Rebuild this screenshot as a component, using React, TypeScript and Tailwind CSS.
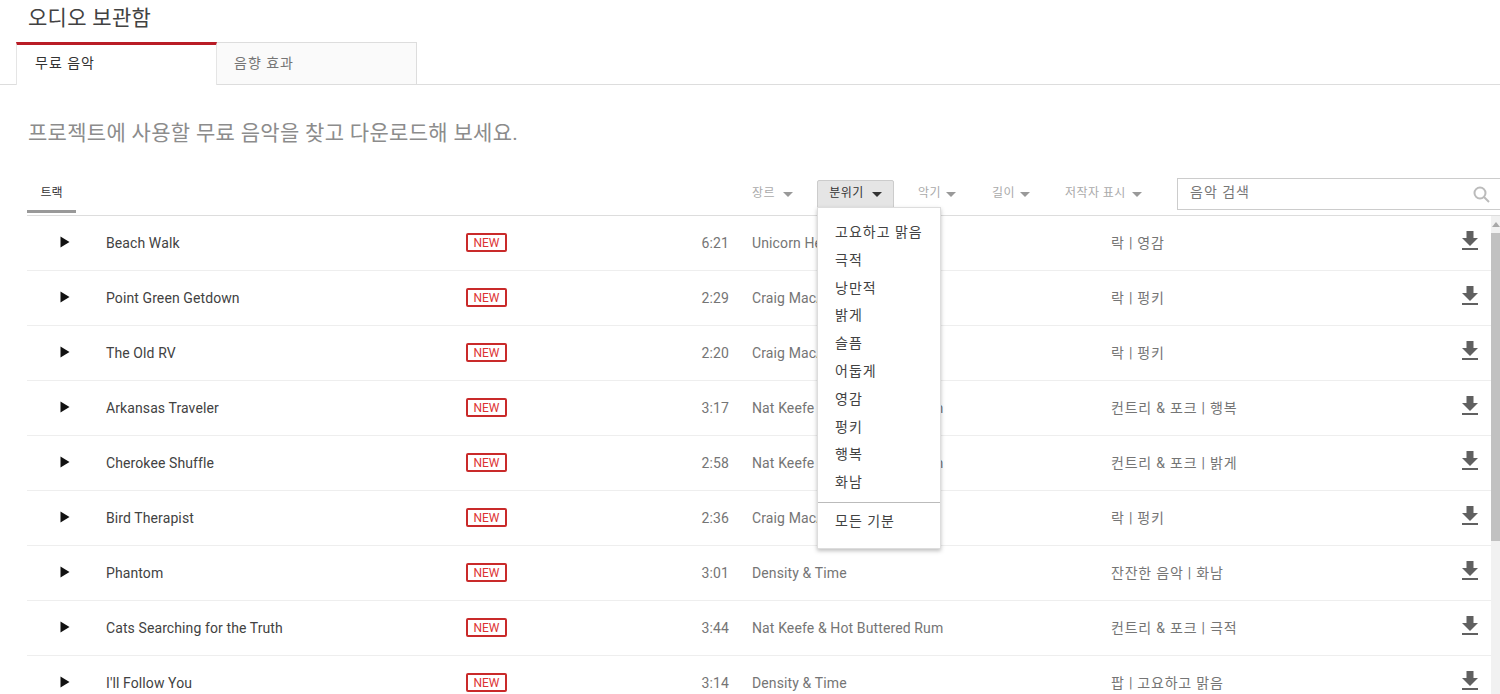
import React from 'react';

const tracks = [
  { title: 'Beach Walk', time: '6:21', artist: 'Unicorn Heads', genre: '락 | 영감' },
  { title: 'Point Green Getdown', time: '2:29', artist: 'Craig MacArthur', genre: '락 | 펑키' },
  { title: 'The Old RV', time: '2:20', artist: 'Craig MacArthur', genre: '락 | 펑키' },
  { title: 'Arkansas Traveler', time: '3:17', artist: 'Nat Keefe & Hot Buttered Rum', genre: '컨트리 & 포크 | 행복' },
  { title: 'Cherokee Shuffle', time: '2:58', artist: 'Nat Keefe & Hot Buttered Rum', genre: '컨트리 & 포크 | 밝게' },
  { title: 'Bird Therapist', time: '2:36', artist: 'Craig MacArthur', genre: '락 | 펑키' },
  { title: 'Phantom', time: '3:01', artist: 'Density & Time', genre: '잔잔한 음악 | 화남' },
  { title: 'Cats Searching for the Truth', time: '3:44', artist: 'Nat Keefe & Hot Buttered Rum', genre: '컨트리 & 포크 | 극적' },
  { title: "I'll Follow You", time: '3:14', artist: 'Density & Time', genre: '팝 | 고요하고 맑음' },
];

const moods = ['고요하고 맑음', '극적', '낭만적', '밝게', '슬픔', '어둡게', '영감', '펑키', '행복', '화남'];

const Caret: React.FC<{ dark?: boolean }> = ({ dark }) => (
  <span
    className={`w-0 h-0 border-x-[5px] border-x-transparent border-t-[5px] ${dark ? 'border-t-[#333]' : 'border-t-[#999]'}`}
  />
);

const Filter: React.FC<{ label: string; width: string; gap: string }> = ({ label, width, gap }) => (
  <div className={`flex items-center shrink-0 text-[12px] tracking-[0.4px] text-[#aaa] ${width} ${gap}`}>
    <span className="pb-[2px]">{label}</span>
    <Caret />
  </div>
);

const Row: React.FC<(typeof tracks)[number]> = ({ title, time, artist, genre }) => (
  <div className="flex items-center h-[55px] shrink-0 border-b border-[#eee] text-[14px] text-[#757575]">
    <div className="w-[79px] flex pl-[33px] -mt-[3px]">
      <svg width="10" height="12" viewBox="0 0 10 12">
        <path d="M0.5 0.5 L9.5 6 L0.5 11.5 Z" fill="#111" />
      </svg>
    </div>
    <div className="w-[360px] text-[#424242] tracking-[0.1px]">{title}</div>
    <div className="w-[236px]">
      <span className="flex items-center justify-center w-[41px] h-[19px] mb-[1px] border-2 border-[#c92a2a] rounded-[2px] text-[12px] text-[#d33]">
        NEW
      </span>
    </div>
    <div className="w-[28px] text-right -ml-[1px] mr-[23px] tracking-[0.1px]">{time}</div>
    <div className="w-[359px] whitespace-nowrap tracking-[0.12px]">{artist}</div>
    <div className="flex-1 whitespace-nowrap tracking-[0.78px]">{genre}</div>
    <svg className="mr-[13px] -mt-[5px]" width="16" height="19" viewBox="0 0 16 19">
      <path d="M4.5 0 H11.5 V7 H16 L8 15 L0 7 H4.5 Z M0 17 H16 V19 H0 Z" fill="#606060" />
    </svg>
  </div>
);

const App: React.FC = () => {
  return (
    <div className="relative h-[694px] overflow-hidden bg-white font-['Roboto','Noto_Sans_CJK_KR',sans-serif]">
      <h1 className="h-[42px] pl-[28px] pt-[3px] text-[21px] leading-[30px] font-normal tracking-[0.3px] text-[#424242]">오디오 보관함</h1>

      <div className="flex h-[43px] pl-[16px] border-b border-[#ddd]">
        <div className="w-[201px] h-[43px] bg-white border-t-[3px] border-x border-x-[#e5e5e5] border-t-[#b91c26] pl-[18px] pt-[8px] text-[14px] leading-[20px] tracking-[1px] text-[#333]">
          무료 음악
        </div>
        <div className="w-[200px] h-[42px] bg-[#fafafa] border border-l-0 border-b-0 border-[#ddd] pl-[17px] pt-[10px] text-[14px] leading-[20px] tracking-[1px] text-[#757575]">
          음향 효과
        </div>
      </div>

      <p className="pl-[28px] pt-[33px] h-[93px] text-[21px] leading-[30px] tracking-[0.3px] text-[#8c8c8c]">
        프로젝트에 사용할 무료 음악을 찾고 다운로드해 보세요.
      </p>

      <div className="flex items-start h-[38px] ml-[27px] border-b border-[#ddd]">
        <div className="w-[49px] h-[35px] shrink-0 border-b-[3px] border-[#999] text-center text-[12px] leading-[30px] text-[#333]">
          트랙
        </div>
        <div className="flex-1 min-w-0 flex items-center h-[32px] pl-[676px]">
          <Filter label="장르" width="w-[65px]" gap="gap-[8px]" />
          <div className="w-[77px] h-[29px] mr-[24px] shrink-0 flex items-center justify-center gap-[8px] bg-[#e5e5e5] border border-[#ccc] rounded-[2px] text-[12px] tracking-[0.4px] text-[#333]">
            <span className="pb-[2px]">분위기</span>
            <Caret dark />
          </div>
          <Filter label="악기" width="w-[74px]" gap="gap-[5px]" />
          <Filter label="길이" width="w-[73px]" gap="gap-[5px]" />
          <Filter label="저작자 표시" width="w-[112px]" gap="gap-[6px]" />
          <div className="flex items-center justify-between w-[332px] h-[32px] shrink-0 border border-[#ccc] pl-[12px] pr-[18px] text-[14px] tracking-[1px] text-[#777]">
            <span className="pb-[3px]">음악 검색</span>
            <svg width="17" height="17" viewBox="0 0 17 17" fill="none" stroke="#bbb" strokeWidth="2">
              <circle cx="7" cy="7" r="5.5" />
              <path d="M11 11 L16 16" />
            </svg>
          </div>
        </div>
      </div>

      <div className="flex">
        <div className="flex-1 ml-[27px] flex flex-col">
          {tracks.map((t) => (
            <Row key={t.title} {...t} />
          ))}
        </div>
        <div className="w-[9px] h-[480px] bg-[#f1f1f1] flex flex-col items-center shrink-0">
          <div className="h-[17px] pt-[6px]">
            <div className="w-0 h-0 border-x-[4px] border-x-transparent border-b-[5px] border-b-[#a8a8a8]" />
          </div>
          <div className="h-[308px] w-full bg-[#c1c1c1]" />
        </div>
      </div>

      {/* dropdown for the open mood filter */}
      <div className="absolute left-[817px] top-[207px] w-[124px] h-[342px] bg-white border border-[#ddd] shadow-[0_2px_4px_rgba(0,0,0,0.25)] text-[14px] tracking-[1px] text-[#424242]">
        <div className="pt-[11px] pl-[17px]">
          {moods.map((m) => (
            <div key={m} className="h-[27.8px] leading-[27.8px] whitespace-nowrap">
              {m}
            </div>
          ))}
        </div>
        <div className="mt-[5px] border-t border-[#bbb] pl-[17px] pt-[4px] leading-[28px]">모든 기분</div>
      </div>
    </div>
  );
};

export default App;
